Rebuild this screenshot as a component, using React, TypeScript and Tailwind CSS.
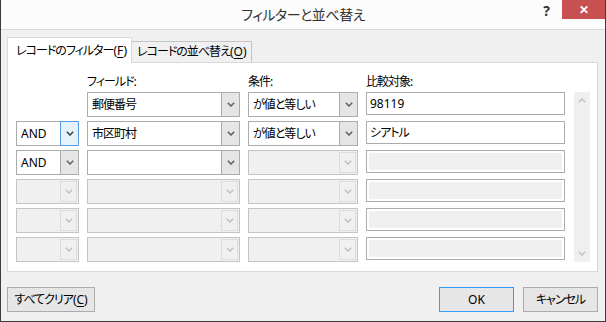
// filter & sort dialog (Windows 8 style)
const Chevron = ({ up = false, color = '#606060' }: { up?: boolean; color?: string }) => (
    <svg width="8" height="5" viewBox="0 0 8 5" className={up ? 'rotate-180' : ''}>
        <path d="M0.8 0.8 L4 4 L7.2 0.8" fill="none" stroke={color} strokeWidth="1.5" />
    </svg>
);

type ComboProps = { text?: string; disabled?: boolean; focused?: boolean; latin?: boolean };

function Combo({ text = '', disabled = false, focused = false, latin = false }: ComboProps) {
    if (disabled) {
        return (
            <div className="flex h-[25px] border border-[#c4c4c4] bg-[#f0f0f0]">
                <div className="flex-1" />
                <div className="my-[1px] mr-[1px] flex w-[17px] items-center justify-center border border-[#dcdcdc] bg-[#f0f0f0]">
                    <Chevron color="#c0c0c0" />
                </div>
            </div>
        );
    }
    return (
        <div className="flex h-[25px] border border-[#acacac] bg-white">
            <div className={`flex flex-1 items-center whitespace-nowrap pl-[4px] leading-[16px] ${latin ? 'tracking-normal' : 'tracking-[-1px]'}`}>{text}</div>
            {focused ? (
                <div className="-my-px -mr-px flex w-[19px] items-center justify-center border border-[#569de5] bg-[#e5f1fb]">
                    <Chevron color="#404040" />
                </div>
            ) : (
                <div className="flex w-[18px] items-center justify-center border-l border-[#acacac] bg-[#e5e5e5]">
                    <Chevron />
                </div>
            )}
        </div>
    );
}

function TextBox({ text, disabled = false, latin = false }: { text?: string; disabled?: boolean; latin?: boolean }) {
    if (disabled) {
        return (
            <div className="h-[23px] border border-[#acacac] bg-white p-[2px]">
                <div className="h-full bg-[#f0f0f0]" />
            </div>
        );
    }
    return (
        <div className={`flex h-[23px] items-center whitespace-nowrap border border-[#acacac] bg-white pl-[3px] leading-[16px] ${latin ? 'tracking-normal' : 'tracking-[-1px]'}`}>
            {text}
        </div>
    );
}

const Key = ({ k }: { k: string }) => (
    <span className="tracking-normal">
        (<span className="underline underline-offset-2">{k}</span>)
    </span>
);

const rows: { and: 'on' | 'focus' | 'off' | 'none'; field: string | null; cond: string | null; value: string | null }[] = [
    { and: 'none', field: '郵便番号', cond: 'が値と等しい', value: '98119' },
    { and: 'focus', field: '市区町村', cond: 'が値と等しい', value: 'シアトル' },
    { and: 'on', field: '', cond: null, value: null },
    { and: 'off', field: null, cond: null, value: null },
    { and: 'off', field: null, cond: null, value: null },
    { and: 'off', field: null, cond: null, value: null },
];

export default function App() {
    return (
        <div className="flex h-[322px] w-[606px] flex-col border-x border-b border-[#3c3c3c] bg-[#f0f0f0] font-['Noto_Sans','Noto_Sans_CJK_JP',sans-serif] text-[12px] text-black [font-feature-settings:'palt']">
            {/* title bar */}
            <div className="flex h-[30px] shrink-0 border-b border-[#dadada] bg-[#fcfcfc]">
                <div className="flex-1" />
                <div className="flex items-center whitespace-nowrap text-[14px] leading-[20px] tracking-[-0.5px] text-[#333333]">フィルターと並べ替え</div>
                <div className="flex flex-1 items-start justify-end">
                    <div className="mr-[12px] mt-[3px] text-[14px] font-bold leading-[16px] text-[#333333]">?</div>
                    <div className="flex h-[19px] w-[43px] items-center justify-center bg-[#c75050] text-[12px] font-bold leading-[16px] text-white">✕</div>
                </div>
            </div>

            <div className="flex flex-1 flex-col pl-[6px] pr-[7px] pt-[7px]">
                {/* tabs */}
                <div className="flex items-end whitespace-nowrap">
                    <div className="relative z-10 -mb-px flex h-[26px] w-[125px] items-center border-x border-t border-[#d9d9d9] bg-white pl-[8px] leading-[16px] tracking-[-1px]">
                        レコードのフィルター<Key k="F" />
                    </div>
                    <div className="flex h-[21px] w-[120px] items-center border-r border-t border-[#c4c4c4] pl-[5px] leading-[16px] tracking-[-1px]">
                        レコードの並べ替え<Key k="O" />
                    </div>
                </div>

                {/* panel */}
                <div className="flex h-[210px] border border-[#d9d9d9] bg-white pl-[8px] pt-[11px]">
                    <div className="flex flex-col">
                        <div className="mb-[2px] grid h-[16px] grid-cols-[63px_153px_110px_199px] gap-x-[8px] leading-[16px] tracking-[-1px]">
                            <div />
                            <div>フィールド:</div>
                            <div>条件:</div>
                            <div>比較対象:</div>
                        </div>
                        <div className="grid grid-cols-[63px_153px_110px_199px] gap-x-[8px] gap-y-[4px]">
                            {rows.map((r, i) => (
                                <div key={i} className="contents">
                                    {r.and === 'none' ? <div /> : <Combo text="AND" latin disabled={r.and === 'off'} focused={r.and === 'focus'} />}
                                    <Combo text={r.field ?? ''} disabled={r.field == null} />
                                    <Combo text={r.cond ?? ''} disabled={r.cond == null} />
                                    <TextBox text={r.value ?? ''} latin={i === 0} disabled={r.value == null} />
                                </div>
                            ))}
                        </div>
                    </div>
                    <div className="ml-[9px] mt-[18px] flex h-[170px] w-[16px] flex-col justify-between bg-[#efefef]">
                        <div className="flex h-[17px] items-center justify-center">
                            <Chevron up color="#c2c2c2" />
                        </div>
                        <div className="flex h-[17px] items-center justify-center">
                            <Chevron color="#c2c2c2" />
                        </div>
                    </div>
                </div>

                {/* buttons */}
                <div className="mt-[15px] flex items-center whitespace-nowrap">
                    <div className="flex h-[25px] w-[88px] items-center justify-center border border-[#acacac] bg-[#e6e6e6] leading-[16px] tracking-[-1px]">
                        すべてクリア<Key k="C" />
                    </div>
                    <div className="flex-1" />
                    <div className="flex h-[25px] w-[75px] items-center justify-center border border-[#3399ff] bg-[#e6e6e6] leading-[16px]">OK</div>
                    <div className="ml-[9px] flex h-[25px] w-[75px] items-center justify-center border border-[#acacac] bg-[#e6e6e6] leading-[16px] tracking-[-1px]">キャンセル</div>
                </div>
            </div>
        </div>
    );
}
